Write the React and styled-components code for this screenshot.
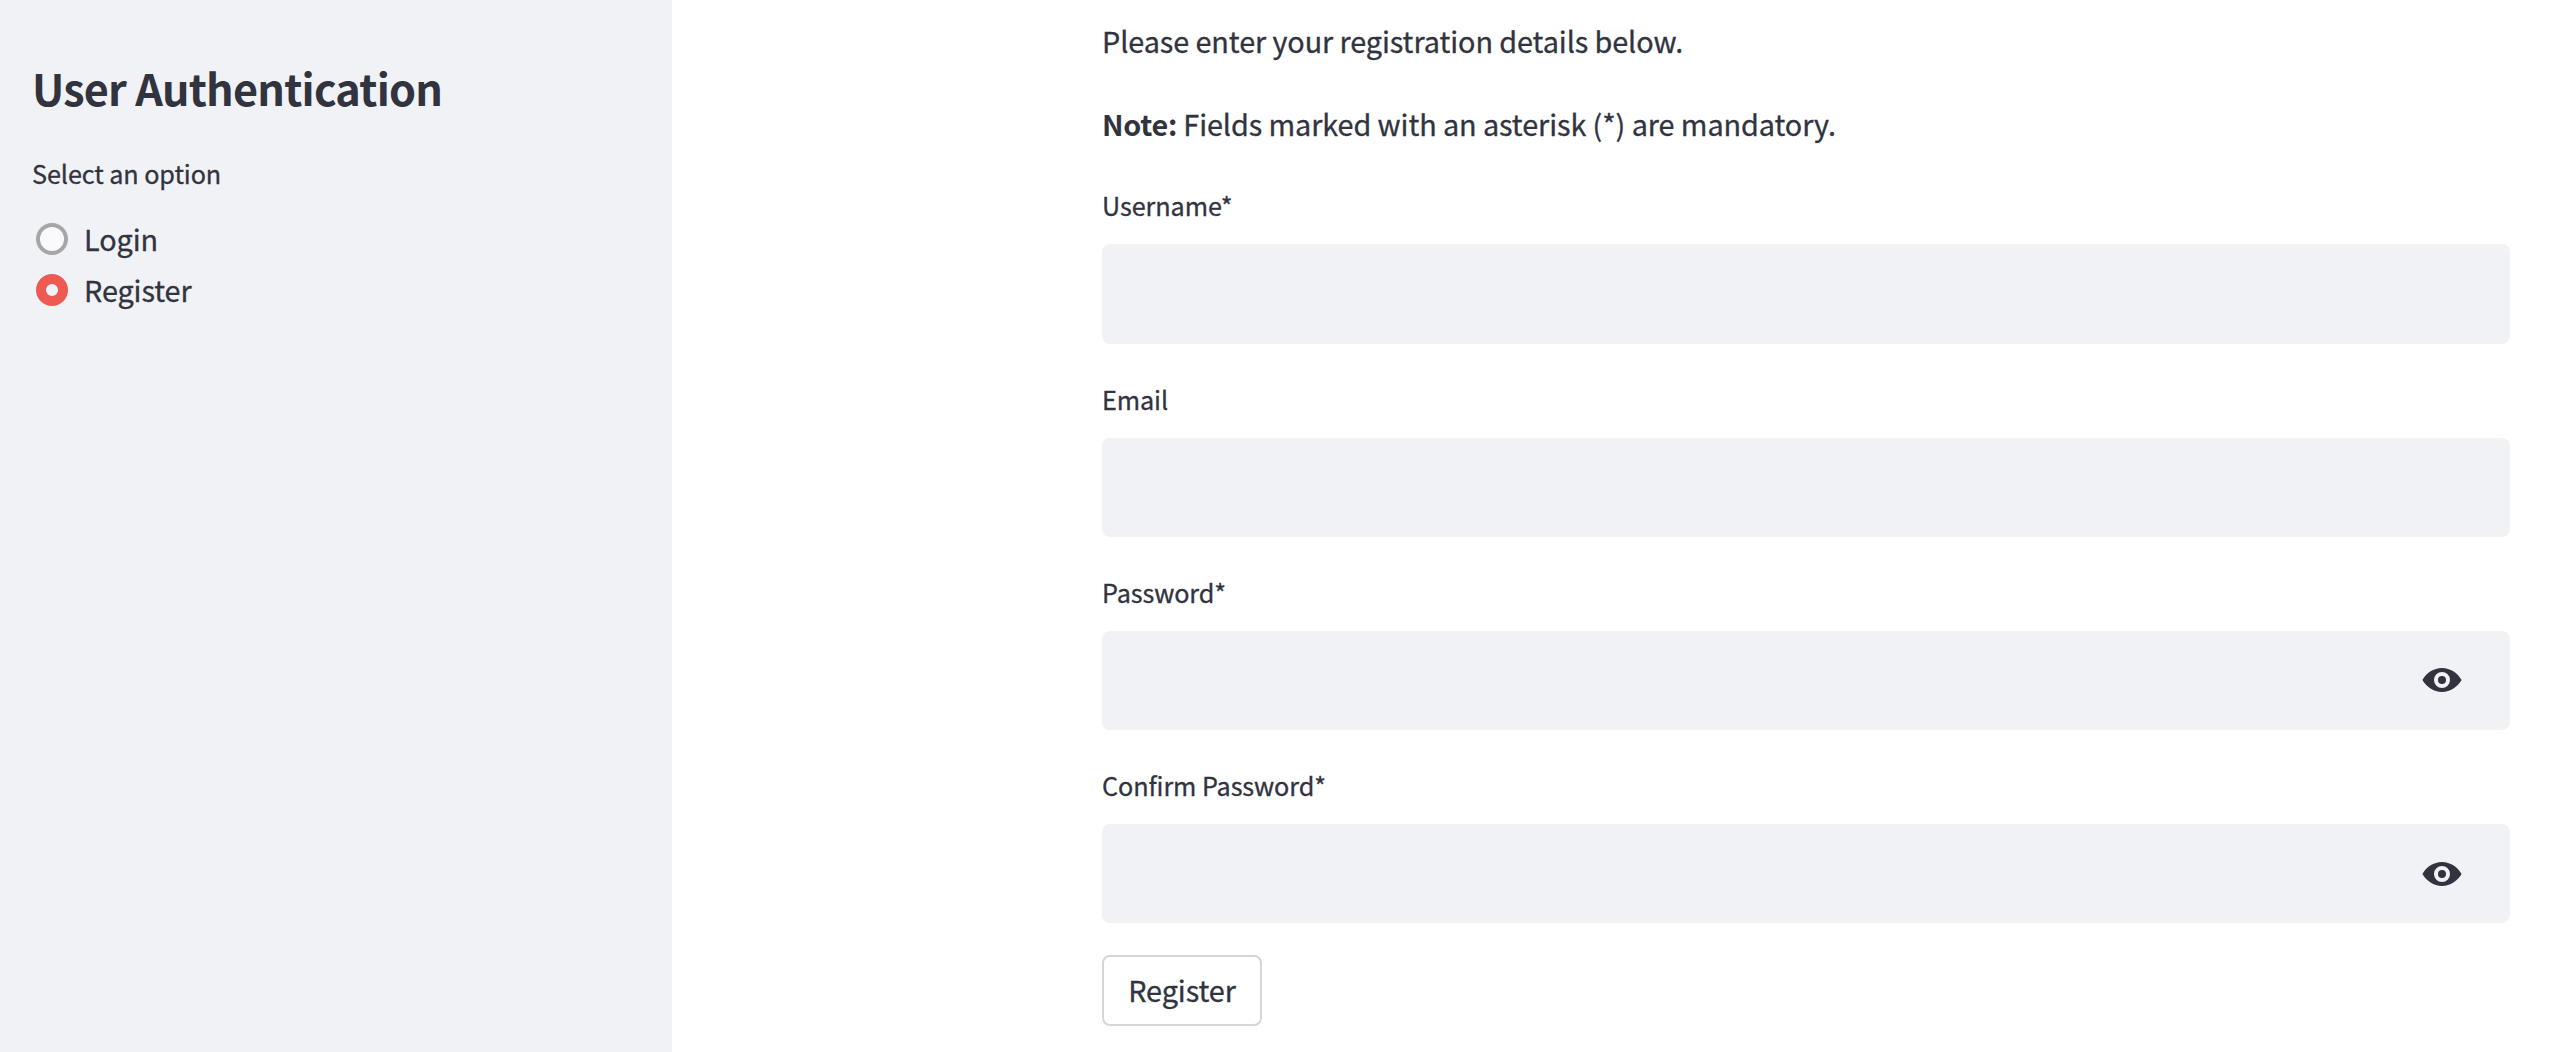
import React, { useState } from "react";
import styled, { createGlobalStyle } from "styled-components";

const GlobalStyle = createGlobalStyle`
  * { box-sizing: border-box; }
  body {
    margin: 0;
    background: #ffffff;
    color: #31333f;
    font-family: "Noto Sans CJK SC", "Noto Sans", sans-serif;
    font-size: 28.8px;
    line-height: 51px;
    letter-spacing: -0.08px;
    -webkit-text-stroke: 0.3px #31333f;
    overflow: hidden;
  }
`;

const Page = styled.div`
  display: flex;
  width: 100%;
  height: 1052px;
  overflow: hidden;
`;

const Sidebar = styled.aside`
  flex: 0 0 672px;
  padding: 58px 32px 0;
  background: #f0f2f6;
`;

const Heading = styled.h1`
  margin: 0 0 35px;
  font-size: 43.2px;
  line-height: 58px;
  font-weight: 700;
  letter-spacing: -0.78px;
  -webkit-text-stroke: 0;
  white-space: nowrap;
`;

const Strong = styled.strong`
  -webkit-text-stroke: 0;
  letter-spacing: -0.3px;
`;

const Label = styled.label`
  display: block;
  height: 45px;
  font-size: 25.2px;
  line-height: ${(p) => p.$line || 45}px;
  white-space: nowrap;
`;

const RadioGroup = styled.div`
  display: flex;
  flex-direction: column;
  margin-top: 17px;
`;

const RadioRow = styled.div`
  display: flex;
  gap: 16px;
  height: 51px;
  padding-left: 4px;
  cursor: pointer;
`;

const RadioMark = styled.span`
  width: 32px;
  height: 32px;
  margin-top: 10px;
  border-radius: 50%;
  border: ${(p) => (p.$checked ? "10px solid #ee5a52" : "4px solid #a4a6aa")};
  background: ${(p) => (p.$checked ? "#f0f2f6" : "#fafafc")};
`;

const Main = styled.main`
  flex: 1;
  padding: 15px 44px 0 430px;
`;

const Paragraph = styled.p`
  margin: 0 0 32px;
  white-space: nowrap;
`;

const Form = styled.form`
  display: flex;
  flex-direction: column;
  align-items: stretch;
  gap: 32px;
  margin-top: 33px;
`;

const Field = styled.div`
  display: flex;
  flex-direction: column;
  gap: 17px;
`;

const InputBox = styled.div`
  display: flex;
  align-items: center;
  height: ${(p) => p.$height}px;
  padding-right: 46px;
  border-radius: 8px;
  background: #f0f2f6;
`;

const Input = styled.input`
  flex: 1;
  height: 100%;
  padding: 0 28px;
  border: 0;
  outline: 0;
  background: transparent;
  color: inherit;
  font: inherit;
`;

const EyeSvg = styled.svg`
  width: 44px;
  height: 44px;
  margin-top: ${(p) => p.$shift}px;
  fill: #31333f;
`;

const Button = styled.button`
  align-self: flex-start;
  width: 160px;
  height: 71px;
  padding: 0 0 2px;
  border: 2px solid #d6d6d9;
  border-radius: 8px;
  background: #ffffff;
  color: inherit;
  font: inherit;
  letter-spacing: inherit;
`;

const Eye = ({ shift }) => (
  <EyeSvg viewBox="0 0 24 24" $shift={shift}>
    <path d="M12 5.5c-4.56 0-8.45 2.7-10.7 6.5 2.25 3.8 6.14 6.5 10.7 6.5s8.45-2.7 10.7-6.5c-2.25-3.8-6.14-6.5-10.7-6.5zm0 10.87a4.37 4.37 0 1 1 0-8.74 4.37 4.37 0 0 1 0 8.74zm0-6.55a2.18 2.18 0 1 0 0 4.36 2.18 2.18 0 0 0 0-4.36z" />
  </EyeSvg>
);

const fields = [
  { label: "Username*", height: 100 },
  { label: "Email", height: 99 },
  { label: "Password*", height: 99, secret: true, shift: -1 },
  { label: "Confirm Password*", height: 99, secret: true, shift: 1 },
];

export default function App() {
  const [option, setOption] = useState("Register");
  return (
    <>
      <GlobalStyle />
      <Page>
        <Sidebar>
          <Heading>User Authentication</Heading>
          <Label as="div">Select an option</Label>
          <RadioGroup>
            {["Login", "Register"].map((name) => (
              <RadioRow key={name} onClick={() => setOption(name)}>
                <RadioMark $checked={option === name} />
                <span>{name}</span>
              </RadioRow>
            ))}
          </RadioGroup>
        </Sidebar>
        <Main>
          <Paragraph>Please enter your registration details below.</Paragraph>
          <Paragraph>
            <Strong>Note:</Strong> Fields marked with an asterisk (*) are mandatory.
          </Paragraph>
          <Form onSubmit={(e) => e.preventDefault()}>
            {fields.map((f) => (
              <Field key={f.label}>
                <Label $line={47}>{f.label}</Label>
                <InputBox $height={f.height}>
                  <Input type={f.secret ? "password" : "text"} />
                  {f.secret && <Eye shift={f.shift} />}
                </InputBox>
              </Field>
            ))}
            <Button type="submit">Register</Button>
          </Form>
        </Main>
      </Page>
    </>
  );
}
